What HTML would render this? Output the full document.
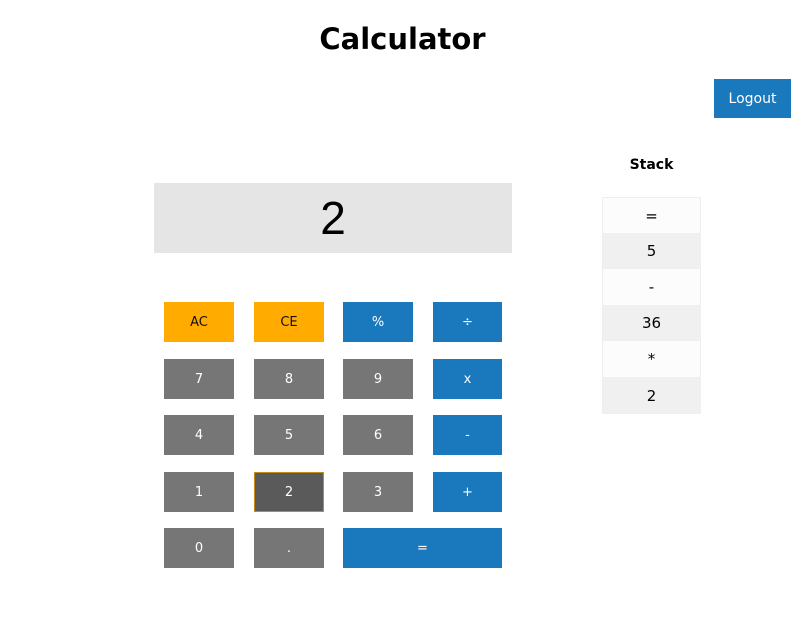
<!DOCTYPE html>
<html><head><style>
body{margin:0;width:805px;height:624px;background:#fff;font-family:"DejaVu Sans","Liberation Sans",sans-serif;position:relative;overflow:hidden}
.a{position:absolute}
h1{position:absolute;left:0;width:805px;top:18px;margin:0;text-align:center;font-size:29px;font-weight:bold;line-height:42px}
.b{position:absolute;width:70px;height:40px;display:flex;align-items:center;justify-content:center;font-size:13px;color:#fff;box-sizing:border-box}
.o{background:#ffab00;color:#111}.g{background:#767676}.u{background:#1a78bc}
.s{position:absolute;left:602px;width:99px;height:36px;display:flex;align-items:center;justify-content:center;font-size:15px;box-sizing:border-box;border-left:1px solid #eee;border-right:1px solid #eee}
</style></head><body>
<h1>Calculator</h1>
<div class="a u" style="left:714px;top:79px;width:77px;height:39px;display:flex;align-items:center;justify-content:center;color:#fff;font-size:14px">Logout</div>
<div class="a" style="left:602px;width:99px;top:155px;text-align:center;font-weight:bold;font-size:14px;line-height:20px">Stack</div>
<div class="s" style="top:197px;background:#fcfcfc;border-top:1px solid #eee">=</div>
<div class="s" style="top:233px;background:#f0f0f0">5</div>
<div class="s" style="top:269px;background:#fcfcfc">-</div>
<div class="s" style="top:305px;background:#f0f0f0">36</div>
<div class="s" style="top:341px;background:#fcfcfc">*</div>
<div class="s" style="top:377px;height:37px;background:#f0f0f0">2</div>
<div class="a" style="left:154px;top:183px;width:358px;height:70px;background:#e5e5e5;display:flex;align-items:center;justify-content:center;font-size:46px;font-family:'Liberation Sans',sans-serif">2</div>
<div class="b o" style="left:164px;top:302px">AC</div>
<div class="b o" style="left:254px;top:302px">CE</div>
<div class="b u" style="left:343px;top:302px">%</div>
<div class="b u" style="left:433px;top:302px;width:69px">÷</div>
<div class="b g" style="left:164px;top:359px">7</div>
<div class="b g" style="left:254px;top:359px">8</div>
<div class="b g" style="left:343px;top:359px">9</div>
<div class="b u" style="left:433px;top:359px;width:69px">x</div>
<div class="b g" style="left:164px;top:415px">4</div>
<div class="b g" style="left:254px;top:415px">5</div>
<div class="b g" style="left:343px;top:415px">6</div>
<div class="b u" style="left:433px;top:415px;width:69px">-</div>
<div class="b g" style="left:164px;top:472px">1</div>
<div class="b" style="left:254px;top:472px;background:#5a5a5a;border:1px solid #c98a1a">2</div>
<div class="b g" style="left:343px;top:472px">3</div>
<div class="b u" style="left:433px;top:472px;width:69px">+</div>
<div class="b g" style="left:164px;top:528px">0</div>
<div class="b g" style="left:254px;top:528px">.</div>
<div class="b u" style="left:343px;top:528px;width:159px">=</div>
</body></html>
